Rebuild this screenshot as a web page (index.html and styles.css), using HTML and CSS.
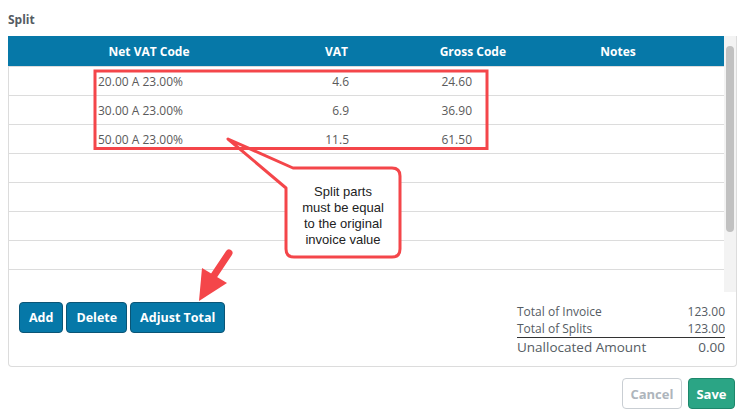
FILE: index.html
```html
<!DOCTYPE html>
<html lang="en">
<head>
    <meta charset="UTF-8">
    <title>Split</title>
    <link rel="stylesheet" href="styles.css">
</head>
<body>
    <div class="page">
        <h2 class="title">Split</h2>
        <div class="panel">
            <div class="grid">
                <div class="grid-body">
                    <table class="splits">
                        <colgroup>
                            <col class="c-sel">
                            <col class="c-net">
                            <col class="c-vat">
                            <col class="c-gross">
                            <col class="c-notes">
                        </colgroup>
                        <thead>
                            <tr>
                                <th></th>
                                <th class="h-net">Net VAT Code</th>
                                <th class="h-vat">VAT</th>
                                <th class="h-gross">Gross Code</th>
                                <th class="h-notes">Notes</th>
                            </tr>
                        </thead>
                        <tbody>
                            <tr><td></td><td class="net">20.00 A 23.00%</td><td class="vat">4.6</td><td class="gross">24.60</td><td></td></tr>
                            <tr><td></td><td class="net">30.00 A 23.00%</td><td class="vat">6.9</td><td class="gross">36.90</td><td></td></tr>
                            <tr><td></td><td class="net">50.00 A 23.00%</td><td class="vat">11.5</td><td class="gross">61.50</td><td></td></tr>
                            <tr><td></td><td></td><td></td><td></td><td></td></tr>
                            <tr><td></td><td></td><td></td><td></td><td></td></tr>
                            <tr><td></td><td></td><td></td><td></td><td></td></tr>
                            <tr><td></td><td></td><td></td><td></td><td></td></tr>
                            <tr><td></td><td></td><td></td><td></td><td></td></tr>
                        </tbody>
                    </table>
                </div>
                <div class="scrollbar"><div class="thumb"></div></div>
            </div>
            <div class="panel-foot">
                <div class="actions">
                    <button class="btn btn-blue">Add</button>
                    <button class="btn btn-blue">Delete</button>
                    <button class="btn btn-blue">Adjust Total</button>
                </div>
                <div class="totals">
                    <div class="total-row"><span>Total of Invoice</span><span>123.00</span></div>
                    <div class="total-row total-sum"><span>Total of Splits</span><span>123.00</span></div>
                    <div class="total-row total-big"><span>Unallocated Amount</span><span>0.00</span></div>
                </div>
            </div>
        </div>
        <div class="dialog-actions">
            <button class="btn btn-cancel">Cancel</button>
            <button class="btn btn-save">Save</button>
        </div>

        <svg class="annot" width="742" height="414" viewBox="0 0 742 414">
            <path class="callout" d="M228 139 L293 168 L392 168 Q400 168 400 176 L400 249 Q400 257 392 257 L294 257 Q286 257 286 249 L286 188 Z"/>
            <text class="callout-text" x="343" y="196">Split parts</text>
            <text class="callout-text" x="343" y="212">must be equal</text>
            <text class="callout-text" x="343" y="228">to the original</text>
            <text class="callout-text" x="343" y="244">invoice value</text>
            <rect class="mark" x="95" y="71" width="392" height="77.5"/>
            <line class="arrow-shaft" x1="229" y1="253" x2="213" y2="277"/>
            <polygon class="arrow-head" points="199,301 202,268 227,283"/>
        </svg>
    </div>
</body>
</html>
```

FILE: styles.css
```css
body, html {
    margin: 0;
    padding: 0;
    background-color: white;
    font-family: "Open Sans", Arial, sans-serif;
}
.page {
    position: relative;
    width: 742px;
    height: 414px;
    padding: 0 5px 0 8px;
    box-sizing: border-box;
}
.title {
    margin: 0;
    padding-top: 12px;
    height: 24px;
    font-size: 12px;
    line-height: 16px;
    font-weight: bold;
    color: #555c63;
}
.panel {
    border: 1px solid #dcdcdc;
    border-top: none;
    border-radius: 0 0 4px 4px;
}
.grid {
    display: flex;
    height: 256px;
    margin-left: -1px;
    overflow: hidden;
}
.grid-body {
    width: 716px;
    overflow: hidden;
}
.scrollbar {
    flex: 1;
    background-color: #f3f3f3;
    padding-top: 10px;
}
.thumb {
    width: 8px;
    height: 186px;
    margin-left: 2px;
    border-radius: 4px;
    background-color: #c1c1c1;
}
.splits {
    width: 716px;
    table-layout: fixed;
    border-collapse: collapse;
    font-size: 12px;
}
.c-sel { width: 84px; }
.c-net { width: 114px; }
.c-vat { width: 149px; }
.c-gross { width: 157px; }
.c-notes { width: 212px; }
.splits th {
    height: 30px;
    padding: 0;
    background-color: #0678a8;
    color: white;
    font-weight: bold;
    border-bottom: 1px solid #dcdcdc;
}
.h-net, .h-notes { text-align: center; }
.splits th.h-vat { text-align: right; padding-right: 7px; }
.splits th.h-gross { text-align: right; padding-right: 6px; }
.splits td {
    height: 28px;
    padding: 0;
    border-bottom: 1px solid #dcdcdc;
    color: #5a5a5a;
    white-space: nowrap;
}
.splits td.net { padding-left: 6px; }
.splits td.vat { text-align: right; padding-right: 6px; }
.splits td.gross { text-align: right; padding-right: 40px; }
.panel-foot {
    display: flex;
    justify-content: space-between;
    height: 74px;
    padding: 10px 11px 0 10px;
    box-sizing: border-box;
}
.actions {
    display: flex;
    gap: 3px;
    align-items: flex-start;
}
.btn {
    height: 31px;
    padding: 0 9px;
    border-radius: 4px;
    font-family: "Open Sans", Arial, sans-serif;
    font-size: 12.5px;
    font-weight: bold;
    cursor: pointer;
}
.btn-blue {
    background-color: #0678a8;
    border: 1px solid #0b5576;
    color: white;
}
.totals {
    width: 208px;
    padding-top: 1px;
    color: #555c63;
    font-size: 12px;
}
.total-row {
    display: flex;
    justify-content: space-between;
    line-height: 17px;
}
.total-sum {
    border-bottom: 1px solid #333;
}
.total-big {
    font-size: 13.5px;
    line-height: 19px;
}
.dialog-actions {
    display: flex;
    justify-content: flex-end;
    gap: 6px;
    margin-top: 11px;
    padding-right: 2px;
}
.btn-cancel {
    padding: 0 7.5px;
    background-color: white;
    border: 1px solid #c9ced3;
    color: #aeb5bc;
    font-size: 13px;
}
.btn-save {
    padding: 0 7.5px;
    background-color: #2ba585;
    border: 1px solid #1d876b;
    color: white;
    font-size: 13px;
}
.annot {
    position: absolute;
    left: 0;
    top: 0;
    pointer-events: none;
}
.callout {
    fill: white;
    stroke: #f4464a;
    stroke-width: 3;
    stroke-linejoin: round;
}
.callout-text {
    font-family: "Liberation Sans", Arial, sans-serif;
    font-size: 13px;
    fill: #222;
    text-anchor: middle;
}
.mark {
    fill: none;
    stroke: #f4464a;
    stroke-width: 3;
}
.arrow-shaft {
    stroke: #f4464a;
    stroke-width: 7;
    stroke-linecap: round;
}
.arrow-head {
    fill: #f4464a;
}
```
